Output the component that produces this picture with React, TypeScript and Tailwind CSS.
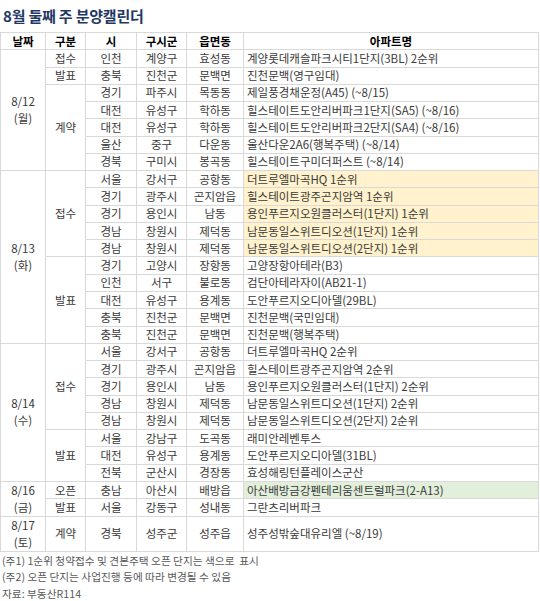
type Row = { si: string; gu: string; dong: string; name: string; tone?: 'yellow' | 'green' };
type Group = { kind: string; rows: Row[] };
type Day = { date: string; wd: string; groups: Group[]; tall?: boolean };

const days: Day[] = [
  {
    date: '8/12',
    wd: '(월)',
    groups: [
      { kind: '접수', rows: [{ si: '인천', gu: '계양구', dong: '효성동', name: '계양롯데캐슬파크시티1단지(3BL) 2순위' }] },
      { kind: '발표', rows: [{ si: '충북', gu: '진천군', dong: '문백면', name: '진천문백(영구임대)' }] },
      {
        kind: '계약',
        rows: [
          { si: '경기', gu: '파주시', dong: '목동동', name: '제일풍경채운정(A45) (~8/15)' },
          { si: '대전', gu: '유성구', dong: '학하동', name: '힐스테이트도안리버파크1단지(SA5) (~8/16)' },
          { si: '대전', gu: '유성구', dong: '학하동', name: '힐스테이트도안리버파크2단지(SA4) (~8/16)' },
          { si: '울산', gu: '중구', dong: '다운동', name: '울산다운2A6(행복주택) (~8/14)' },
          { si: '경북', gu: '구미시', dong: '봉곡동', name: '힐스테이트구미더퍼스트 (~8/14)' },
        ],
      },
    ],
  },
  {
    date: '8/13',
    wd: '(화)',
    groups: [
      {
        kind: '접수',
        rows: [
          { si: '서울', gu: '강서구', dong: '공항동', name: '더트루엘마곡HQ 1순위', tone: 'yellow' },
          { si: '경기', gu: '광주시', dong: '곤지암읍', name: '힐스테이트광주곤지암역 1순위', tone: 'yellow' },
          { si: '경기', gu: '용인시', dong: '남동', name: '용인푸르지오원클러스터(1단지) 1순위', tone: 'yellow' },
          { si: '경남', gu: '창원시', dong: '제덕동', name: '남문동일스위트디오션(1단지) 1순위', tone: 'yellow' },
          { si: '경남', gu: '창원시', dong: '제덕동', name: '남문동일스위트디오션(2단지) 1순위', tone: 'yellow' },
        ],
      },
      {
        kind: '발표',
        rows: [
          { si: '경기', gu: '고양시', dong: '장항동', name: '고양장항아테라(B3)' },
          { si: '인천', gu: '서구', dong: '불로동', name: '검단아테라자이(AB21-1)' },
          { si: '대전', gu: '유성구', dong: '용계동', name: '도안푸르지오디아델(29BL)' },
          { si: '충북', gu: '진천군', dong: '문백면', name: '진천문백(국민임대)' },
          { si: '충북', gu: '진천군', dong: '문백면', name: '진천문백(행복주택)' },
        ],
      },
    ],
  },
  {
    date: '8/14',
    wd: '(수)',
    groups: [
      {
        kind: '접수',
        rows: [
          { si: '서울', gu: '강서구', dong: '공항동', name: '더트루엘마곡HQ 2순위' },
          { si: '경기', gu: '광주시', dong: '곤지암읍', name: '힐스테이트광주곤지암역 2순위' },
          { si: '경기', gu: '용인시', dong: '남동', name: '용인푸르지오원클러스터(1단지) 2순위' },
          { si: '경남', gu: '창원시', dong: '제덕동', name: '남문동일스위트디오션(1단지) 2순위' },
          { si: '경남', gu: '창원시', dong: '제덕동', name: '남문동일스위트디오션(2단지) 2순위' },
        ],
      },
      {
        kind: '발표',
        rows: [
          { si: '서울', gu: '강남구', dong: '도곡동', name: '래미안레벤투스' },
          { si: '대전', gu: '유성구', dong: '용계동', name: '도안푸르지오디아델(31BL)' },
          { si: '전북', gu: '군산시', dong: '경장동', name: '효성해링턴플레이스군산' },
        ],
      },
    ],
  },
  {
    date: '8/16',
    wd: '(금)',
    groups: [
      { kind: '오픈', rows: [{ si: '충남', gu: '아산시', dong: '배방읍', name: '아산배방금강펜테리움센트럴파크(2-A13)', tone: 'green' }] },
      { kind: '발표', rows: [{ si: '서울', gu: '강동구', dong: '성내동', name: '그란츠리버파크' }] },
    ],
  },
  {
    date: '8/17',
    wd: '(토)',
    tall: true,
    groups: [{ kind: '계약', rows: [{ si: '경북', gu: '성주군', dong: '성주읍', name: '성주성밖숲대유리엘 (~8/19)' }] }],
  },
];

const cell = 'border border-[#d9d9d9] text-center whitespace-nowrap p-0';

export default function App() {
  return (
    <div
      className="w-[540px] h-[601px] bg-white text-[11.5px] text-[#3a3a3a] overflow-hidden"
      style={{ fontFamily: '"Noto Sans CJK KR", "Noto Sans", sans-serif' }}
    >
      {/* Title */}
      <div className="h-[32px] flex items-center pl-[3px]">
        <h1 className="text-[15px] font-bold text-[#1f3864] tracking-[-0.2px]">8월 둘째 주 분양캘린더</h1>
      </div>

      {/* Calendar table */}
      <table className="w-[539px] table-fixed border-collapse">
        <colgroup>
          <col className="w-[45px]" />
          <col className="w-[40px]" />
          <col className="w-[51px]" />
          <col className="w-[50px]" />
          <col className="w-[57px]" />
          <col />
        </colgroup>
        <thead>
          <tr className="h-[17.27px] leading-[15px] font-bold text-black">
            <th className={cell}>날짜</th>
            <th className={cell}>구분</th>
            <th className={cell}>시</th>
            <th className={cell}>구시군</th>
            <th className={cell}>읍면동</th>
            <th className={cell}>아파트명</th>
          </tr>
        </thead>
        <tbody>
          {days.map((day) => {
            const total = day.groups.reduce((n, g) => n + g.rows.length, 0);
            return day.groups.map((group, gi) =>
              group.rows.map((row, ri) => (
                <tr
                  key={`${day.date}-${gi}-${ri}`}
                  className={`${day.tall ? 'h-[33px]' : 'h-[17.27px]'} leading-[15px]`}
                >
                  {gi === 0 && ri === 0 && (
                    <td rowSpan={total} className={`${cell} leading-[17px]`}>
                      {day.date}
                      <br />
                      {day.wd}
                    </td>
                  )}
                  {ri === 0 && (
                    <td rowSpan={group.rows.length} className={cell}>
                      {group.kind}
                    </td>
                  )}
                  <td className={cell}>{row.si}</td>
                  <td className={cell}>{row.gu}</td>
                  <td className={cell}>{row.dong}</td>
                  <td
                    className={`${cell} text-left pl-[3px] ${
                      row.tone === 'yellow' ? 'bg-[#fff2cc]' : row.tone === 'green' ? 'bg-[#e2efda]' : ''
                    }`}
                  >
                    {row.name}
                  </td>
                </tr>
              ))
            );
          })}
        </tbody>
      </table>

      {/* Notes */}
      <div className="pl-[2px] pt-[1px] leading-[16.5px] text-[10.7px] text-[#595959]">
        <p>(주1) 1순위 청약접수 및 견본주택 오픈 단지는 색으로&nbsp; 표시</p>
        <p>(주2) 오픈 단지는 사업진행 등에 따라 변경될 수 있음</p>
        <p>자료: 부동산R114</p>
      </div>
    </div>
  );
}
